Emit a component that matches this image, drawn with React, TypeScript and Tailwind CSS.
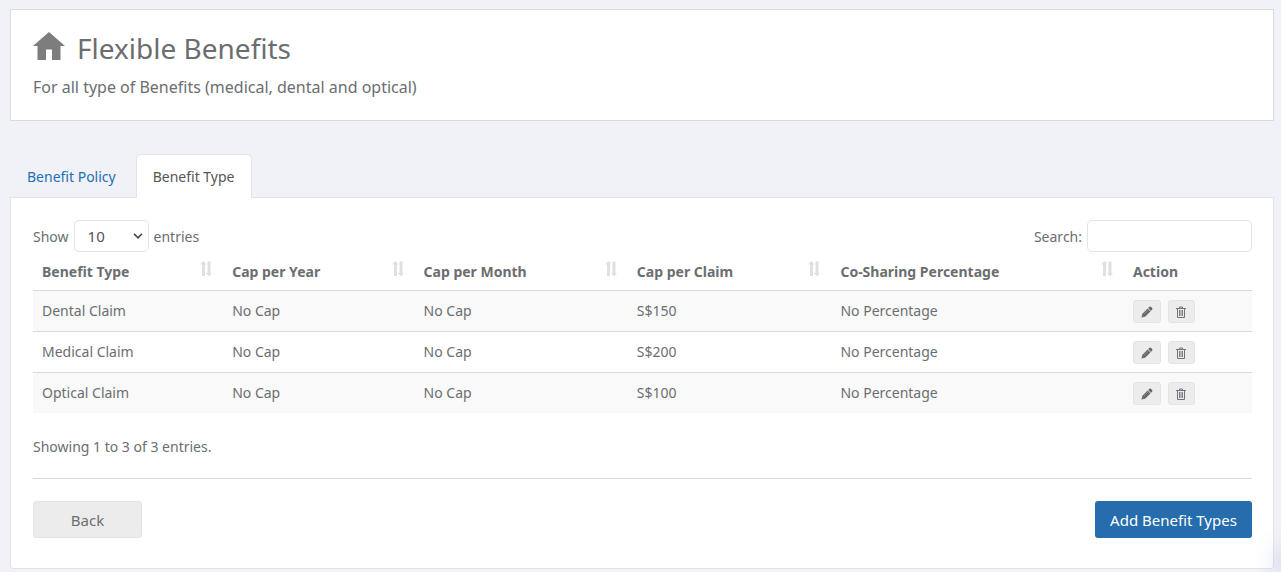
import { useState } from "react";

const columns = [
  { label: "Benefit Type", width: "w-[15.6%]" },
  { label: "Cap per Year", width: "w-[15.7%]" },
  { label: "Cap per Month", width: "w-[17.5%]" },
  { label: "Cap per Claim", width: "w-[16.7%]" },
  { label: "Co-Sharing Percentage", width: "w-[24%]" },
];

const rows = [
  { type: "Dental Claim", claim: "S$150" },
  { type: "Medical Claim", claim: "S$200" },
  { type: "Optical Claim", claim: "S$100" },
];

function HomeIcon() {
  return (
    <svg viewBox="0 0 32 28" className="mt-[3px] h-7 w-8 fill-[#7d7d7d]" aria-hidden="true">
      <path d="M16 0 32 14H27.500V28H19V17.500H13V28H4.500V14H0Z" />
    </svg>
  );
}

function SortIcon() {
  return (
    <svg viewBox="0 0 12 16" className="mt-1 h-4 w-3 fill-[#dfe0e2]" aria-hidden="true">
      <path d="M3.500 0 6.500 3.500H5V15H2V3.500H0ZM7.500 .5H10.500V12H12L9 15.500 5.800 12H7.500Z" />
    </svg>
  );
}

function PencilIcon() {
  return (
    <svg viewBox="0 0 12 12" className="h-3 w-3" aria-hidden="true">
      <path fill="#666a70" d="M.5 11.500 1.200 7.900 6.600 2.500 9.500 5.400 4.100 10.800ZM7.100 2 8.500.7Q9.200.2 9.900.8L11.200 2.100Q11.800 2.800 11.200 3.500L9.900 4.900Z" />
      <path stroke="#a5a8ac" strokeWidth=".5" d="m3 8 4-4M1.700 9.400l.9.900" />
    </svg>
  );
}

function TrashIcon() {
  return (
    <svg viewBox="0 0 12 12" className="h-3 w-3" fill="none" stroke="#707379" aria-hidden="true">
      <path d="M1 2.500h10M4.500 2V1h3v1M2.500 3v8.500h7V3" />
      <path strokeWidth=".9" d="M4.500 4v6M6 4v6M7.500 4v6" />
    </svg>
  );
}

const iconButton =
  "flex h-[23px] items-center justify-center rounded-[3px] border border-[#e3e4e6] bg-[#ececec]";

export default function App() {
  const [length, setLength] = useState("10");
  const [search, setSearch] = useState("");
  const shown = rows
    .filter((r) => r.type.toLowerCase().includes(search.toLowerCase()))
    .slice(0, Number(length));

  return (
    <div className="relative min-h-screen overflow-hidden bg-[#f1f2f7] pt-[9px] pr-[7px] pb-[3px] pl-2.5 font-['Noto_Sans',sans-serif] text-sm text-[#6b6e70]">
      <header className="border border-[#d8dadc] bg-white px-[22px] pt-[19px] pb-5">
        <div className="flex items-start gap-3">
          <HomeIcon />
          <h1 className="text-[28px] leading-[38px]">Flexible Benefits</h1>
        </div>
        <p className="mt-2 text-base leading-[25px]">
          For all type of Benefits (medical, dental and optical)
        </p>
      </header>

      <nav className="mt-[33px] flex">
        <a href="#policy" className="mr-[3px] px-[17px] pt-[13px] pb-2.5 leading-5 text-[#1f6fb2]">
          Benefit Policy
        </a>
        <a
          href="#type"
          aria-current="page"
          className="relative -mb-px rounded-t-[5px] border border-b-0 border-[#e3e4e8] bg-white px-4 pt-3 pb-[11px] leading-5 text-[#555]"
        >
          Benefit Type
        </a>
      </nav>

      <main className="rounded-b-[3px] border border-[#e1e3e7] bg-white pt-[22px] pr-[21px] pb-[30px] pl-[22px]">
        <div className="flex items-center justify-between">
          <label className="flex items-center gap-[5px]">
            <span className="pt-0.5">Show</span>
            <span className="relative flex">
              <select
                value={length}
                onChange={(e) => setLength(e.target.value)}
                className="h-8 w-[75px] appearance-none rounded-[5px] border border-[#e3e4e6] bg-white pt-0.5 pl-[13px] text-[15px] text-[#555]"
              >
                <option>10</option>
                <option>25</option>
                <option>50</option>
              </select>
              <svg
                viewBox="0 0 10 6"
                className="pointer-events-none absolute top-[13px] right-1.5 h-1.5 w-2.5"
                fill="none"
                stroke="#444"
                strokeWidth="1.600"
                aria-hidden="true"
              >
                <path d="m1 .8 4 4 4-4" />
              </svg>
            </span>
            <span className="pt-0.5">entries</span>
          </label>
          <label className="flex items-center gap-[5px]">
            <span className="pt-0.5">Search:</span>
            <input
              type="search"
              value={search}
              onChange={(e) => setSearch(e.target.value)}
              className="h-8 w-[165px] rounded-[5px] border border-[#e3e4e6] bg-white px-3"
            />
          </label>
        </div>

        <table className="w-full table-fixed border-collapse text-left">
          <thead>
            <tr className="h-[38px] border-b border-[#d8dadc]">
              {columns.map((c) => (
                <th key={c.label} className={`${c.width} py-0 pr-[11px] pl-[9px] font-bold`}>
                  <div className="flex items-start justify-between pb-0.5">
                    <span className="pt-[5px] leading-5">{c.label}</span>
                    <SortIcon />
                  </div>
                </th>
              ))}
              <th className="px-[9px] py-0 font-bold">
                <div className="pt-[5px] pb-0.5 leading-5">Action</div>
              </th>
            </tr>
          </thead>
          <tbody>
            {shown.map((r) => (
              <tr
                key={r.type}
                className="h-[41px] border-b border-[#d8dadc] last:border-b-0 odd:bg-[#f9f9f9]"
              >
                <td className="px-[9px] leading-5">{r.type}</td>
                <td className="px-[9px] leading-5">No Cap</td>
                <td className="px-[9px] leading-5">No Cap</td>
                <td className="px-[9px] leading-5">{r.claim}</td>
                <td className="px-[9px] leading-5">No Percentage</td>
                <td className="px-[9px]">
                  <div className="flex gap-[7px] pt-0.5">
                    <button type="button" aria-label="Edit" className={`${iconButton} w-7`}>
                      <PencilIcon />
                    </button>
                    <button type="button" aria-label="Delete" className={`${iconButton} w-[27px]`}>
                      <TrashIcon />
                    </button>
                  </div>
                </td>
              </tr>
            ))}
          </tbody>
        </table>

        <p className="mt-6 leading-5">
          Showing 1 to {shown.length} of {rows.length} entries.
        </p>
        <hr className="mt-[21px] mb-[22px] border-[#d8dadc]" />
        <div className="flex justify-between text-[15px]">
          <button
            type="button"
            className="h-[37px] w-[109px] rounded-[3px] border border-[#e3e4e6] bg-[#ececec] pt-0.5"
          >
            Back
          </button>
          <button
            type="button"
            className="h-[37px] w-[157px] rounded-[3px] bg-[#266dad] pt-0.5 text-white"
          >
            Add Benefit Types
          </button>
        </div>
      </main>
      <div className="absolute -right-4 bottom-0 h-5 w-4 rounded-full shadow-[0_0_24px_4px_#5a78dc40]" />
    </div>
  );
}
